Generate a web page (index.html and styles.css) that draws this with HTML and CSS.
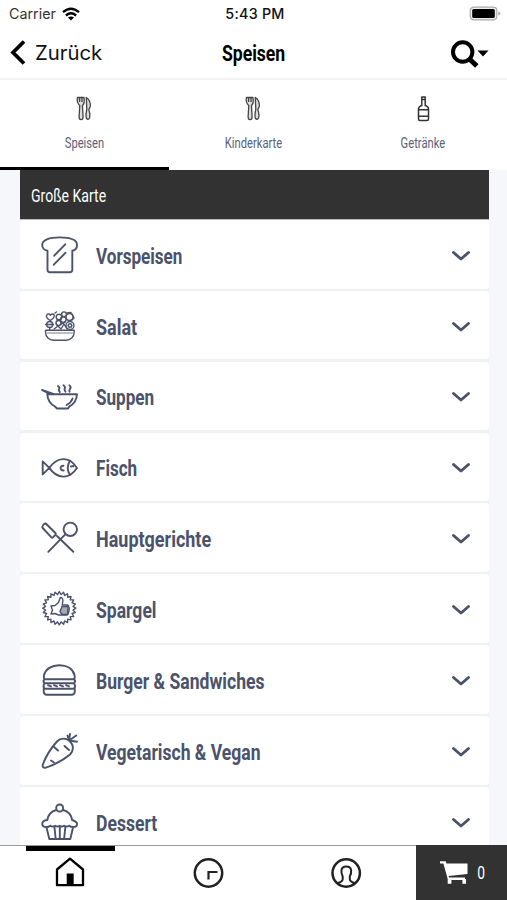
FILE: index.html
```html
<!DOCTYPE html>
<html lang="de">
<head>
<meta charset="utf-8">
<title>Speisen</title>
<link rel="stylesheet" href="styles.css">
</head>
<body>
<div class="app">
  <header>
    <div class="status">
      <div class="carrier">Carrier
        <svg class="wifi" width="18" height="14" viewBox="0 0 18 14"><g fill="none" stroke="#000" stroke-width="2.4"><path d="M1 5.2Q9-1.8 17 5.2"/><path d="M3.9 8.5Q9 4.2 14.1 8.5"/></g><path d="M6 10.6Q9 8.3 12 10.6L9 13.6z"/></svg>
      </div>
      <time>5:43 PM</time>
      <svg class="battery" width="32" height="16" viewBox="0 0 32 16"><rect x="1.2" y="1.2" width="26.6" height="12.6" rx="3.5" fill="#eee" stroke="#aaa" stroke-width="1.2"/><rect x="3.2" y="3" width="22.6" height="9" rx="1.5"/><path d="M29.3 5.4q2 .4 2 2.1t-2 2.1z" fill="#aaa"/></svg>
    </div>
    <nav class="navbar">
      <a class="back"><svg width="16" height="26" viewBox="0 0 16 26"><path d="M14 1.5 3 12.500l11 11" fill="none" stroke="#000" stroke-width="3.7"/></svg><span>Zurück</span></a>
      <h1 class="narrow">Speisen</h1>
      <svg class="search" width="40" height="30" viewBox="0 0 40 30"><circle cx="12.700" cy="14" r="9.700" fill="none" stroke="#000" stroke-width="4"/><path d="m19.500 21 7.300 7" stroke="#000" stroke-width="5"/><path d="M27.500 12.500h11L33 18.500z"/></svg>
    </nav>
  </header>

  <nav class="tabs">
    <a class="tab active">
      <svg width="26" height="28" viewBox="0 0 26 28"><g fill="#ddd" stroke="#444" stroke-width="1.3" stroke-linejoin="round"><path d="M5.500 2.500h6.500q1 6-1.600 8l.7 11q0 3.200-2 3.200t-2-3.200l.7-11Q4.400 8 5.500 2.500z"/><path d="M7.600 3v4M10 3v4"/><path d="M14.300 2.500q4.500 3 4 9l-1.500 3q1.800 5 .8 8.500-1.500 2.500-3.300 0-.8-4 .5-8.500z"/></g></svg>
      <span class="narrow">Speisen</span>
    </a>
    <a class="tab">
      <svg width="26" height="28" viewBox="0 0 26 28"><g fill="#ddd" stroke="#444" stroke-width="1.3" stroke-linejoin="round"><path d="M5.500 2.500h6.500q1 6-1.600 8l.7 11q0 3.200-2 3.200t-2-3.200l.7-11Q4.400 8 5.500 2.500z"/><path d="M7.600 3v4M10 3v4"/><path d="M14.300 2.500q4.500 3 4 9l-1.500 3q1.800 5 .8 8.500-1.500 2.500-3.300 0-.8-4 .5-8.500z"/></g></svg>
      <span class="narrow">Kinderkarte</span>
    </a>
    <a class="tab">
      <svg width="26" height="28" viewBox="0 0 26 28"><g fill="none" stroke="#333" stroke-width="1.5" stroke-linejoin="round"><path d="M11.800 2h3.400v8.500q3.300 1 3.300 3.500v10q0 1.500-1.500 1.500h-7q-1.500 0-1.500-1.500V14q0-2.500 3.300-3.500z"/><path d="M8.500 14.800h10M8.500 21.300h10M11.800 4.500h3.400"/></g></svg>
      <span class="narrow">Getränke</span>
    </a>
  </nav>

  <main>
    <h2><span class="narrow">Große Karte</span></h2>
    <ul>
      <li>
        <svg class="icon" viewBox="0 0 40 40"><path d="M7.500 15.700C4 15.200 2.200 12.500 2.200 10 2.200 5 9 2.400 19.700 2.400S37 5 37 10c0 2.500-1.500 5.200-4.700 5.700v19q0 2.500-2.500 2.500H10q-2.500 0-2.500-2.500z"/><path d="M14.200 20.700 25.200 9.300M13.800 29.700l11.800-12"/></svg>
        <span class="narrow">Vorspeisen</span><svg class="chevron" viewBox="0 0 20 12"><path d="m2.500 2.500 7.500 6.500 7.500-6.500"/></svg>
      </li>
      <li>
        <svg class="icon fine" viewBox="0 0 40 40"><path d="M5.600 24.200h28.600v2c0 5-4 8-8 8H13.500c-4 0-8-3-8-8z"/><path d="M7.500 27h25" opacity=".5"/><path d="M10.300 14.500C7 12.500 5.800 10.500 6.800 8.800c1-1.500 3-.9 3.500.5 1-1.700 3-1.800 3.800-.3.600 1.800-1 3.800-3.800 5.500z"/><circle cx="9.700" cy="18.500" r="3"/><path d="M5.500 18.500h8M9.700 21.500V24"/><circle cx="19" cy="11" r="2.800"/><circle cx="24" cy="8.300" r="2.400"/><circle cx="29.500" cy="11" r="3.500"/><circle cx="23.300" cy="13.600" r="2.800"/><circle cx="18.500" cy="17" r="2.500"/><circle cx="30" cy="19.500" r="4"/><circle cx="30" cy="19.500" r="1.800"/><path d="M15 7l1.500-1M27 7l4-.5M32 8l2 4-2 2M14 23l4-3 3 3 3-5 3 5M21 18l4-2"/></svg>
        <span class="narrow wide">Salat</span><svg class="chevron" viewBox="0 0 20 12"><path d="m2.500 2.500 7.500 6.500 7.500-6.500"/></svg>
      </li>
      <li>
        <svg class="icon" viewBox="0 0 40 40"><path d="M2 13l12 4.200M2 13l8 4.200M7.300 17.200H37c-.3 5.800-3 9.800-7.500 12.200L28 31.500H17l-2-2C10.500 27 7.500 23 7.300 17.200z"/><path d="M32.600 21.500q-1.600 4.500-6 6.500M18 9q2.500 2 .8 3.500 0 1.500 1 2.500M23.500 8.300q2.500 2 1 3.500 0 1.500 1 2.900M29.500 8.300q2 2 .5 3.500-1 1.500-.5 2.900"/></svg>
        <span class="narrow">Suppen</span><svg class="chevron" viewBox="0 0 20 12"><path d="m2.500 2.500 7.500 6.500 7.500-6.500"/></svg>
      </li>
      <li>
        <svg class="icon" viewBox="0 0 40 40"><path d="M2.700 13.400v13l6.600-6.500zM9.300 19.900C17 9 29 7.500 37 20 29 32 17 31 9.300 19.900z"/><path d="M30 12.500q-4.500 7.500 0 14.500M23.500 17.700q-3.500.3-2.800 2.800.5 2.200 3 2M31 18.500l2.500-.5"/></svg>
        <span class="narrow">Fisch</span><svg class="chevron" viewBox="0 0 20 12"><path d="m2.500 2.500 7.500 6.500 7.500-6.500"/></svg>
      </li>
      <li>
        <svg class="icon" viewBox="0 0 40 40"><circle cx="30.300" cy="11.300" r="6.700"/><path d="M25.500 16.200 8.300 33.800M17 18 33.300 33.800M5.800 5.500 15.400 15q1 1 0 2l-2.200 2.200q-1 1-2 0L2.700 10q-.8-1.500.5-3 1.200-1.800 2.600-1.500z"/></svg>
        <span class="narrow wide">Hauptgerichte</span><svg class="chevron" viewBox="0 0 20 12"><path d="m2.500 2.500 7.500 6.500 7.500-6.500"/></svg>
      </li>
      <li>
        <svg class="icon fine" viewBox="0 0 40 40"><path id="burst" d=""/><path d="M11 17l4-.5 3.500-3 1.800-5q3 0 2.500 4l-.6 3.500H27q2 .3 1.500 2 1.500 1 .3 2.500 1 1.500-.3 2.500.2 2.500-2 3h-8L15 24.500l-4 .5 1.500-4z"/><path fill="#4b526b" fill-opacity=".5" d="M22 17.500h5.500l.5 2-.5 6H22l-2-3z"/></svg>
        <span class="narrow medium">Spargel</span><svg class="chevron" viewBox="0 0 20 12"><path d="m2.500 2.500 7.500 6.500 7.500-6.500"/></svg>
      </li>
      <li>
        <svg class="icon" viewBox="0 0 40 40"><path d="M4.500 19.200q-1-1.700-.5-4C5.500 9 11.500 5.200 19.300 5.200S33 9 34.600 15.200q.5 2.300-.5 4zM4.500 19.200q-2 2 0 4h29.600q2-2 0-4M4.500 23.200q-2 3 0 5.600h29.600q2-2.600 0-5.600M3.700 29v2.500q0 3.200 3.200 3.200h24.700q3.200 0 3.200-3.200V29"/><path d="M8 25.200l3 1.200M14 25.200l3 1.200M20 25.200l3 1.200M26 25.200l3 1.200"/></svg>
        <span class="narrow medium">Burger &amp; Sandwiches</span><svg class="chevron" viewBox="0 0 20 12"><path d="m2.500 2.500 7.500 6.500 7.500-6.500"/></svg>
      </li>
      <li>
        <svg class="icon" viewBox="0 0 40 40"><path d="M29 9.500C26 7 20.500 6.700 17 10.500 12 16 5.500 26 2.700 34q-.5 3 2.500 2.800C14 34 24 28.500 30 23.500c3.700-3.500 4.300-9.500-1-14z"/><path d="M29 9.500 37 10.700M29 9.500l7.300-5M29 9.500 30 3M29 9.500 27.500 4.500M13.500 15.500l4.500 4M24.500 15l4.500 4M11 29.500l3 2"/></svg>
        <span class="narrow medium">Vegetarisch &amp; Vegan</span><svg class="chevron" viewBox="0 0 20 12"><path d="m2.500 2.500 7.500 6.500 7.500-6.500"/></svg>
      </li>
      <li>
        <svg class="icon" viewBox="0 0 40 40"><circle cx="19.700" cy="6" r="3.500"/><path d="M16.300 8C11 9.500 8 13.500 7.300 18 4 18.300 2.300 20 2.300 22q0 3 4 3 2.500 0 4-1.300 2.500 1.500 5 0 2.200 1.500 4.400 0 2.200 1.500 4.400 0 2.500 1.500 5 0 1.500 1.300 4 1.300 4 0 4-3 0-2.200-5-4C31.500 13.500 28.500 9.500 23 8M6.500 25.300l2.800 11.700h21l2.800-11.700M14.500 25.500l1.200 11.500M19.800 25.500v11.500M25.300 25.500l-1.200 11.500"/></svg>
        <span class="narrow medium">Dessert</span><svg class="chevron" viewBox="0 0 20 12"><path d="m2.500 2.500 7.500 6.500 7.500-6.500"/></svg>
      </li>
    </ul>
  </main>

  <footer>
    <a class="foot active"><svg width="32" height="34" viewBox="0 0 32 34"><path d="M4 13.500 17 2.700l13 10.800v15.700H4z" fill="none" stroke="#000" stroke-width="2.300" stroke-linejoin="round"/><path d="M13.700 17.500h7v12h-7z"/></svg></a>
    <a class="foot"><svg width="34" height="34" viewBox="0 0 34 34"><g fill="none" stroke="#222" stroke-width="2.500"><circle cx="17.500" cy="17" r="13.700"/><path d="M17.500 23.500v-7.500h9" stroke-width="2.200"/></g></svg></a>
    <a class="foot"><svg width="34" height="34" viewBox="0 0 34 34"><g fill="none" stroke="#222"><circle cx="17.200" cy="17" r="13.700" stroke-width="2.500"/><path stroke-width="2" d="M8.500 27q5.200-1.200 5.200-4v-2.500Q12 17.500 12.500 14q.6-3.500 4.800-3.500t4.800 3.500q.4 3.500-1.300 6.500V23q0 2.800 5 4"/></g></svg></a>
    <a class="cart"><svg width="30" height="26" viewBox="0 0 30 26"><path fill="#fff" d="M1 1.200h5.700l.8 2.300H28.500V14L9.500 16l.7 1.500H26V19h1v4.800h-3.600V20h-11v3.800H8.700V19L4.400 3.500H1z"/></svg><span class="narrow">0</span></a>
  </footer>
</div>
<script src="burst.js"></script>
</body>
</html>
```
FILE: burst.js
```js
// Serrated outline of the badge icon
const teeth = 24;
const points = Array.from({ length: teeth * 2 }, (_, i) => {
  const r = i % 2 ? 13.8 : 16.6;
  const a = (i * Math.PI) / teeth - Math.PI / 2;
  return `${(19.3 + r * Math.cos(a)).toFixed(2)} ${(19.2 + r * Math.sin(a)).toFixed(2)}`;
});
document.getElementById("burst").setAttribute("d", `M${points.join("L")}Z`);
```
FILE: styles.css
```css
* { box-sizing: border-box; margin: 0; padding: 0; }
body { width: 507px; height: 900px; overflow: hidden; background: #f5f7fb; font-family: Inter, "Liberation Sans", sans-serif; color: #111; }
svg { display: block; flex: none; }
.app { display: flex; flex-direction: column; height: 900px; }
.narrow { display: inline-block; font-family: Roboto, sans-serif; white-space: nowrap; transform: scaleX(.745); }

header { height: 80px; background: #fff; border-bottom: 2px solid #f3f3f4; flex: none; }
.status { display: grid; grid-template-columns: 1fr auto 1fr; align-items: center; height: 27px; padding: 0 6px 0 9px; font-size: 14.300px; }
.carrier { display: flex; align-items: center; gap: 6px; color: #333; }
time { font-weight: 500; font-size: 14.300px; letter-spacing: .25px; }
.battery { justify-self: end; }
.navbar { display: grid; grid-template-columns: 1fr auto 1fr; align-items: center; height: 51px; padding: 0 17px 0 17px; }
.back { display: flex; align-items: center; gap: 9px; margin-left: -7px; font-size: 20.300px; }
h1 { font-size: 22px; font-weight: 700; color: #000; }
h1.narrow { transform: translateY(1px) scaleX(.8); }
.search { justify-self: end; }

.tabs { display: grid; grid-template-columns: repeat(3, 1fr); height: 90px; background: #fff; flex: none; }
.tab { display: flex; flex-direction: column; align-items: center; padding-top: 15px; gap: 10px; border-bottom: 3px solid transparent; font-size: 15px; line-height: 20px; color: #5b617c; }
.tab.active { border-color: #000; }

main { flex: 1; min-height: 0; overflow: hidden; margin: 0 18.500px 0 19.500px; background: #f0f1f3; }
h2 { display: flex; align-items: center; height: 50px; padding: 2px 0 0 11.500px; background: #323232; color: #fff; font-size: 18.500px; font-weight: 400; border-bottom: 1px solid #bbb; }
h2 .narrow, li .narrow { transform-origin: left; }
h2 .narrow { transform: scaleX(.76); }
ul { list-style: none; display: grid; gap: 2.370px; }
li { display: flex; align-items: center; height: 68.500px; padding: 0 17.700px 0 20px; background: #fff; border-radius: 3px; font-size: 22px; font-weight: 700; color: #4b526b; }
li .narrow { flex: 1; margin: 4px 0 0 16.500px; transform: scaleX(.777); }
li .medium { transform: scaleX(.798); }
li .wide { transform: scaleX(.817); }
.icon { width: 40px; height: 40px; margin-top: 1.500px; }
.icon, .chevron { fill: none; stroke: #4b526b; stroke-width: 1.900; stroke-linecap: round; stroke-linejoin: round; }
.icon.fine { stroke-width: 1.400; }
.chevron { width: 20px; height: 12px; margin-top: 3px; stroke-width: 2.900; }

footer { display: grid; grid-template-columns: 138.500px 138.500px 138.500px 1fr; height: 55px; background: #fff; border-top: 1px solid #999; flex: none; }
.foot { display: flex; justify-content: center; align-items: center; position: relative; }
.foot.active::before { content: ""; position: absolute; left: 25.500px; top: 0; width: 89px; height: 5px; background: #000; }
.cart { display: flex; align-items: center; gap: 7px; padding-left: 23px; background: #323232; color: #fff; font-size: 18.500px; margin-top: -1px; }
```
